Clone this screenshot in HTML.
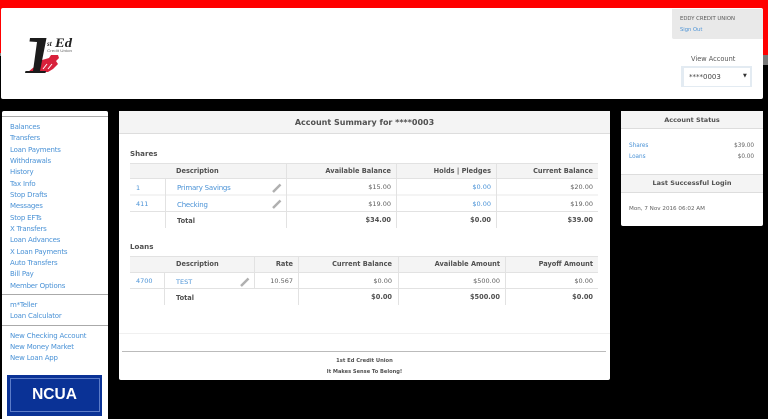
<!DOCTYPE html>
<html style="background:#000"><head><meta charset="utf-8"><style>
html,body{margin:0;padding:0;width:768px;height:419px;overflow:hidden;background:#000;font-family:"DejaVu Sans",sans-serif;font-size:6.5px;color:#5f5f5f}
body{filter:blur(.3px)}
div,a,span{position:absolute;white-space:nowrap}
.b{background:#fff}
.t{line-height:10px;height:10px}
.l{color:#4a92d6}
.h{font-weight:bold;color:#505050}
.r{text-align:right}
.c{text-align:center}
.g{background:#e2e2e2}
.hd{background:#f4f4f4}
.s{font-size:7px;letter-spacing:-.2px}
.th{font-size:6.600px}
</style></head><body>
<div style="left:0;top:0;width:768px;height:55px;background:#f00"></div>
<div style="left:0;top:53px;width:2px;height:3px;background:#888"></div>
<div style="left:762px;top:55px;width:6px;height:10px;background:#777"></div>
<div class="b" style="left:1px;top:8px;width:762px;height:91px;border-radius:2px"></div>

<svg style="position:absolute;left:20px;top:33px" width="60" height="45" viewBox="0 0 60 45">
<path d="M8 39L14 34L19 33L22 27L29 25L31 22L38 22L39 25L36 28L38 31L33 36L28 39Z" fill="#d8213b"/>
<path d="M10 5H26.500L20 38H26L25.500 40H5L5.500 38H13L17 9L9.500 8.500Z" fill="#1c1c1c"/>
<path d="M23 36L27 31M28 36L32 31" stroke="#fff" stroke-width="1"/>
<text x="27" y="13" font-family="Liberation Serif" font-weight="bold" font-style="italic" font-size="7" fill="#222">st</text>
<text x="35" y="14" font-family="Liberation Serif" font-weight="bold" font-style="italic" font-size="13" fill="#222" textLength="17" lengthAdjust="spacingAndGlyphs">Ed</text>
<text x="27" y="19" font-family="Liberation Sans" font-size="4" fill="#666" textLength="25" lengthAdjust="spacingAndGlyphs">Credit Union</text>
</svg>

<div style="left:672px;top:9px;width:91px;height:30px;background:#e9e9e9;border-radius:0 0 0 2px"></div>
<div class="t" style="left:680px;top:14px;font-size:5.300px;color:#555">EDDY CREDIT UNION</div>
<div class="t l" style="left:680px;top:25px;font-size:5.200px">Sign Out</div>
<div class="t" style="left:691px;top:54px;font-size:6.600px;color:#555">View Account</div>
<div style="left:681px;top:66px;width:71px;height:21px;background:#e3ebf2"></div>
<div style="left:684px;top:68px;width:66px;height:18px;background:#fff"></div>
<div class="t" style="left:689px;top:72px;font-size:7px;color:#444">****0003</div>
<div class="t" style="left:743px;top:71px;font-size:5px;color:#333">▼</div>

<div class="b" style="left:2px;top:111px;width:106px;height:308px;border-radius:2px 2px 0 0"></div>
<div style="left:2px;top:116px;width:106px;height:1px;background:#aaa"></div>
<div class="t l s" style="left:10px;top:122px">Balances</div>
<div class="t l s" style="left:10px;top:133px">Transfers</div>
<div class="t l s" style="left:10px;top:145px">Loan Payments</div>
<div class="t l s" style="left:10px;top:156px">Withdrawals</div>
<div class="t l s" style="left:10px;top:167px">History</div>
<div class="t l s" style="left:10px;top:179px">Tax Info</div>
<div class="t l s" style="left:10px;top:190px">Stop Drafts</div>
<div class="t l s" style="left:10px;top:201px">Messages</div>
<div class="t l s" style="left:10px;top:213px">Stop EFTs</div>
<div class="t l s" style="left:10px;top:224px">X Transfers</div>
<div class="t l s" style="left:10px;top:235px">Loan Advances</div>
<div class="t l s" style="left:10px;top:247px">X Loan Payments</div>
<div class="t l s" style="left:10px;top:258px">Auto Transfers</div>
<div class="t l s" style="left:10px;top:269px">Bill Pay</div>
<div class="t l s" style="left:10px;top:281px">Member Options</div>
<div style="left:2px;top:294px;width:106px;height:1px;background:#aaa"></div>
<div class="t l s" style="left:10px;top:300px">m*Teller</div>
<div class="t l s" style="left:10px;top:311px">Loan Calculator</div>
<div style="left:2px;top:325px;width:106px;height:1px;background:#aaa"></div>
<div class="t l s" style="left:10px;top:331px">New Checking Account</div>
<div class="t l s" style="left:10px;top:342px">New Money Market</div>
<div class="t l s" style="left:10px;top:353px">New Loan App</div>
<div style="left:7px;top:375px;width:95px;height:41px;background:#0a3296"></div>
<div style="left:10px;top:378px;width:88px;height:32px;border:1px solid #5c7cc8"></div>
<div class="c" style="left:7px;top:385px;width:95px;height:20px;font:bold 15.500px/20px 'Liberation Sans',sans-serif;color:#fff">NCUA</div>

<div class="b" style="left:119px;top:111px;width:491px;height:269px;border-radius:2px"></div>
<div class="hd" style="left:119px;top:111px;width:491px;height:22px;border-bottom:1px solid #ddd"></div>
<div class="t c h" style="left:119px;top:118px;width:491px;font-size:8px">Account Summary for ****0003</div>

<div class="t h" style="left:130px;top:149px;font-size:7.100px">Shares</div>
<div class="hd" style="left:130px;top:163px;width:468px;height:15px"></div>
<div class="g" style="left:130px;top:163px;width:468px;height:1px"></div>
<div class="g" style="left:130px;top:178px;width:468px;height:1px"></div>
<div class="hd" style="left:130px;top:194px;width:468px;height:2px"></div>
<div class="g" style="left:130px;top:211px;width:468px;height:1px"></div>
<div class="g" style="left:165px;top:179px;width:1px;height:49px"></div>
<div class="g" style="left:286px;top:163px;width:1px;height:65px"></div>
<div class="g" style="left:396px;top:163px;width:1px;height:65px"></div>
<div class="g" style="left:496px;top:163px;width:1px;height:65px"></div>
<div class="t h th" style="left:176px;top:166px">Description</div>
<div class="t h r th" style="left:287px;top:166px;width:104px">Available Balance</div>
<div class="t h r th" style="left:397px;top:166px;width:94px">Holds | Pledges</div>
<div class="t h r th" style="left:497px;top:166px;width:96px">Current Balance</div>

<div class="t l" style="left:136px;top:183px">1</div>
<div class="t l s" style="left:177px;top:183px">Primary Savings</div>
<div class="t r" style="left:287px;top:182px;width:104px">$15.00</div>
<div class="t r l" style="left:397px;top:182px;width:94px">$0.00</div>
<div class="t r" style="left:497px;top:182px;width:96px">$20.00</div>
<div class="t l" style="left:136px;top:199px">411</div>
<div class="t l s" style="left:177px;top:200px">Checking</div>
<div class="t r" style="left:287px;top:199px;width:104px">$19.00</div>
<div class="t r l" style="left:397px;top:199px;width:94px">$0.00</div>
<div class="t r" style="left:497px;top:199px;width:96px">$19.00</div>
<div class="t h th" style="left:177px;top:216px">Total</div>
<div class="t h r th" style="left:287px;top:215px;width:104px">$34.00</div>
<div class="t h r th" style="left:397px;top:215px;width:94px">$0.00</div>
<div class="t h r th" style="left:497px;top:215px;width:96px">$39.00</div>
<svg style="position:absolute;left:272px;top:183px" width="10" height="10"><path d="M1 9L8.500 1.500" stroke="#b0b0b0" stroke-width="2.500"/></svg>
<svg style="position:absolute;left:272px;top:199px" width="10" height="10"><path d="M1 9L8.500 1.500" stroke="#b0b0b0" stroke-width="2.500"/></svg>

<div class="t h" style="left:130px;top:242px;font-size:7.100px">Loans</div>
<div class="hd" style="left:130px;top:256px;width:468px;height:16px"></div>
<div class="g" style="left:130px;top:256px;width:468px;height:1px"></div>
<div class="g" style="left:130px;top:272px;width:468px;height:1px"></div>
<div class="g" style="left:130px;top:288px;width:468px;height:1px"></div>
<div class="g" style="left:164px;top:273px;width:1px;height:32px"></div>
<div class="g" style="left:254px;top:256px;width:1px;height:33px"></div>
<div class="g" style="left:298px;top:256px;width:1px;height:49px"></div>
<div class="g" style="left:398px;top:256px;width:1px;height:49px"></div>
<div class="g" style="left:505px;top:256px;width:1px;height:49px"></div>
<div class="t h th" style="left:176px;top:259px">Description</div>
<div class="t h r th" style="left:255px;top:259px;width:38px">Rate</div>
<div class="t h r th" style="left:299px;top:259px;width:93px">Current Balance</div>
<div class="t h r th" style="left:399px;top:259px;width:101px">Available Amount</div>
<div class="t h r th" style="left:506px;top:259px;width:87px">Payoff Amount</div>
<div class="t l" style="left:136px;top:276px">4700</div>
<div class="t l" style="left:176px;top:277px">TEST</div>
<div class="t r" style="left:255px;top:276px;width:38px">10.567</div>
<div class="t r" style="left:299px;top:276px;width:93px">$0.00</div>
<div class="t r" style="left:399px;top:276px;width:101px">$500.00</div>
<div class="t r" style="left:506px;top:276px;width:87px">$0.00</div>
<div class="t h th" style="left:176px;top:293px">Total</div>
<div class="t h r th" style="left:299px;top:292px;width:93px">$0.00</div>
<div class="t h r th" style="left:399px;top:292px;width:101px">$500.00</div>
<div class="t h r th" style="left:506px;top:292px;width:87px">$0.00</div>
<svg style="position:absolute;left:240px;top:277px" width="10" height="10"><path d="M1 9L8.500 1.500" stroke="#b0b0b0" stroke-width="2.500"/></svg>

<div style="left:119px;top:333px;width:491px;height:1px;background:#f0f0f0"></div>
<div style="left:122px;top:351px;width:484px;height:1px;background:#bbb"></div>
<div class="t c h" style="left:119px;top:356px;width:491px;font-size:5.200px">1st Ed Credit Union</div>
<div class="t c h" style="left:119px;top:367px;width:491px;font-size:5.100px">It Makes Sense To Belong!</div>

<div class="b" style="left:621px;top:111px;width:142px;height:115px;border-radius:2px"></div>
<div class="hd" style="left:621px;top:111px;width:142px;height:17px;border-bottom:1px solid #ddd"></div>
<div class="t c h" style="left:621px;top:115px;width:142px;font-size:6.500px">Account Status</div>
<div class="t l" style="left:629px;top:141px;font-size:5.700px">Shares</div>
<div class="t r" style="left:690px;top:141px;width:64px;font-size:5.700px">$39.00</div>
<div class="t l" style="left:629px;top:152px;font-size:5.700px">Loans</div>
<div class="t r" style="left:690px;top:152px;width:64px;font-size:5.700px">$0.00</div>
<div class="hd" style="left:621px;top:174px;width:142px;height:17px;border-top:1px solid #ddd;border-bottom:1px solid #ddd"></div>
<div class="t c h" style="left:621px;top:178px;width:142px;font-size:6.500px">Last Successful Login</div>
<div class="t" style="left:629px;top:204px;font-size:5.600px">Mon, 7 Nov 2016 06:02 AM</div>
</body></html>
